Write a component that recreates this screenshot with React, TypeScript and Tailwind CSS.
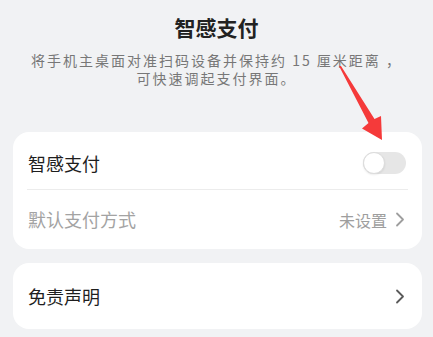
import React from "react";

const font = { fontFamily: '"Noto Sans CJK SC", "Noto Sans", sans-serif' };

function Chevron({ className }: { className?: string }) {
  return (
    <svg width="10" height="15" viewBox="0 0 10 15" className={className} fill="none">
      <path d="M2 1.5 L8 7.5 L2 13.5" stroke="currentColor" strokeWidth="1.8" strokeLinecap="round" strokeLinejoin="round" />
    </svg>
  );
}

function Toggle() {
  return (
    <div className="relative w-[43px] h-[22px] rounded-full bg-[#e6e6e6]">
      <div className="absolute left-0 top-0 w-[22px] h-[22px] rounded-full bg-white border border-[#dcdcdc] shadow-[0_1px_2px_rgba(0,0,0,0.08)]" />
    </div>
  );
}

export default function App() {
  return (
    <div className="relative w-[433px] h-[337px] bg-[#f1f2f4] overflow-hidden" style={font}>
      <div className="pt-[13px] text-center">
        <h1 className="text-[21px] leading-[28px] font-bold text-[#222]">智感支付</h1>
        <p className="mt-[10px] text-[14px] leading-[18px] tracking-[2px] text-[#777]">
          将手机主桌面对准扫码设备并保持约 15 厘米距离 ，
          <br />
          可快速调起支付界面。
        </p>
      </div>

      <div className="mt-[45px] ml-[13px] w-[409px] rounded-[16px] bg-white">
        <div className="h-[57px] pt-[5px] pl-[15px] pr-[16px] flex items-center justify-between">
          <span className="text-[18px] text-[#1e1e1e]">智感支付</span>
          <Toggle />
        </div>
        <div className="mx-[14px] h-px bg-[#ececec]" />
        <div className="h-[59px] pl-[15px] pr-[17px] flex items-center justify-between">
          <span className="text-[18px] text-[#a3a3a3]">默认支付方式</span>
          <div className="flex items-center gap-[8px]">
            <span className="text-[16px] text-[#9e9e9e]">未设置</span>
            <Chevron className="text-[#9e9e9e]" />
          </div>
        </div>
      </div>

      <div className="mt-[14px] ml-[13px] w-[409px] h-[66px] rounded-[16px] bg-white pl-[15px] pr-[17px] flex items-center justify-between">
        <span className="text-[18px] text-[#1e1e1e]">免责声明</span>
        <Chevron className="text-[#5a5a5a]" />
      </div>

      <svg className="absolute left-0 top-0 pointer-events-none" width="433" height="337" viewBox="0 0 433 337">
        <polygon points="339,66 341,66 374.5,119 381,116 382,140 362,128.5 368.5,123" fill="#f53a3a" />
      </svg>
    </div>
  );
}
